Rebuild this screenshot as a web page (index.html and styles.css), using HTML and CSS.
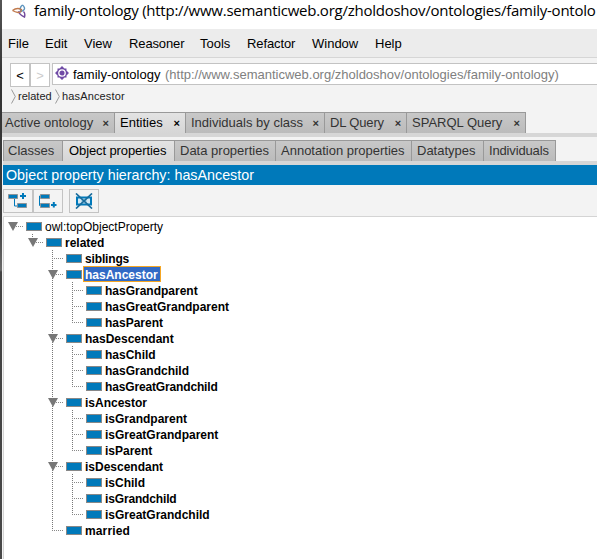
FILE: index.html
```html
<!DOCTYPE html>
<html lang="en">
<head>
<meta charset="utf-8">
<title>family-ontology</title>
<link rel="stylesheet" href="styles.css">
</head>
<body>
<div class="window">
  <header class="titlebar">
    <svg class="logo" width="14" height="14" viewBox="0 0 14 14" fill="none" stroke-width="1.4">
      <path d="M10.500 1Q7 3.500 9 7.500Q13 6 12.500 4Q12 2 10.500 1" stroke="#5b93bd"/>
      <path d="M7 7Q6.500 10.500 12.500 13Q13.500 9.500 11.500 7.500" stroke="#70489b"/>
      <path d="M.5 6.500Q5 3 9.500 5.500Q9 9 6 8.500Q3 8 .5 6.500" stroke="#c07a4d"/>
    </svg>
    <span>family-ontology (http://www.semanticweb.org/zholdoshov/ontologies/family-ontolo</span>
  </header>
  <nav class="menubar">
    <span class="m-file">File</span><span class="m-edit">Edit</span><span class="m-view">View</span><span class="m-reasoner">Reasoner</span><span class="m-tools">Tools</span><span class="m-refactor">Refactor</span><span class="m-window">Window</span><span>Help</span>
  </nav>
  <div class="location">
    <button class="nav">&lt;</button><button class="nav off">&gt;</button>
    <div class="field">
      <svg width="14" height="14" viewBox="0 0 14 14"><path d="M7 0L9.500 2.500H11.500V4.500L14 7L11.500 9.500V11.500H9.500L7 14L4.500 11.500H2.500V9.500L0 7L2.500 4.500V2.500H4.500Z" fill="#6f4aa5"/><circle cx="7" cy="7" r="3.200" fill="none" stroke="#fff" stroke-width="1.300"/></svg>
      <span class="name">family-ontology</span><span class="iri">(http://www.semanticweb.org/zholdoshov/ontologies/family-ontology)</span>
    </div>
  </div>
  <div class="crumbs">
    <svg width="5" height="15" viewBox="0 0 5 15"><path d="M.5.5L4.3 7.5L.5 14.5"/></svg><span class="c1">related</span>
    <svg width="5" height="15" viewBox="0 0 5 15"><path d="M.5.5L4.3 7.5L.5 14.5"/></svg><span class="c2">hasAncestor</span>
  </div>
  <div class="tabs main">
    <div class="tab first">Active ontology<i>×</i></div><div class="tab sel">Entities<i>×</i></div><div class="tab">Individuals by class<i>×</i></div><div class="tab tight">DL Query<i>×</i></div><div class="tab">SPARQL Query<i>×</i></div><div class="rest"></div>
  </div>
  <div class="strip"></div>
  <div class="tabs sub">
    <div class="tab edge">Classes</div><div class="tab sel">Object properties</div><div class="tab">Data properties</div><div class="tab">Annotation properties</div><div class="tab">Datatypes</div><div class="tab tight">Individuals</div><div class="rest"></div>
  </div>
  <div class="strip low"></div>
  <h1 class="view-title">Object property hierarchy: hasAncestor</h1>
  <div class="tools">
    <button><svg width="20" height="16" viewBox="0 0 20 16"><path d="M6.5 5v8H10" fill="none" stroke="#0079ba"/><path d="M.5 1.500h9v4h-9zM9.5 10.500h9v4h-9z" fill="#0079ba" stroke="#8b9398"/><path d="M12 3h6M15 0v6" stroke="#0079ba" stroke-width="2"/></svg></button>
    <button><svg width="20" height="16" viewBox="0 0 20 16"><path d="M4 3H1.500v9.500H4" fill="none" stroke="#0079ba"/><path d="M2.500 1.500h9v4h-9zM2.500 10.500h9v4h-9z" fill="#0079ba" stroke="#8b9398"/><path d="M13 12h5.500M15.800 9v5.500" stroke="#0079ba" stroke-width="2"/></svg></button>
    <button class="del"><svg width="20" height="16" viewBox="0 0 20 16"><path d="M3 4.500h14v7H3z" fill="#d5e8f3" stroke="#0079ba" stroke-width="2"/><path d="M7.500 5.500l2.500 1.500 2.500-1.500v5L10 9l-2.500 1.500z" fill="#8fc0dc"/><path d="M2 .5L18 15.500M18 .5L2 15.500" stroke="#176b9c" stroke-width="1.700"/></svg></button>
  </div>
  <div class="tree">
    <ul class="root">
      <li><div class="row open plain"><b></b><span>owl:topObjectProperty</span></div>
        <ul>
          <li><div class="row open"><b></b><span>related</span></div>
            <ul>
              <li><div class="row"><b></b><span class="t-sib">siblings</span></div></li>
              <li><div class="row open"><b></b><span class="picked">hasAncestor</span></div>
                <ul>
                  <li><div class="row"><b></b><span>hasGrandparent</span></div></li>
                  <li><div class="row"><b></b><span>hasGreatGrandparent</span></div></li>
                  <li><div class="row"><b></b><span>hasParent</span></div></li>
                </ul></li>
              <li><div class="row open"><b></b><span>hasDescendant</span></div>
                <ul>
                  <li><div class="row"><b></b><span>hasChild</span></div></li>
                  <li><div class="row"><b></b><span>hasGrandchild</span></div></li>
                  <li><div class="row"><b></b><span class="t-igg">hasGreatGrandchild</span></div></li>
                </ul></li>
              <li><div class="row open"><b></b><span>isAncestor</span></div>
                <ul>
                  <li><div class="row"><b></b><span>isGrandparent</span></div></li>
                  <li><div class="row"><b></b><span>isGreatGrandparent</span></div></li>
                  <li><div class="row"><b></b><span>isParent</span></div></li>
                </ul></li>
              <li><div class="row open"><b></b><span>isDescendant</span></div>
                <ul>
                  <li><div class="row"><b></b><span>isChild</span></div></li>
                  <li><div class="row"><b></b><span class="t-igg">isGrandchild</span></div></li>
                  <li><div class="row"><b></b><span>isGreatGrandchild</span></div></li>
                </ul></li>
              <li><div class="row"><b></b><span class="t-mar">married</span></div></li>
            </ul></li>
        </ul></li>
    </ul>
  </div>
</div>
</body>
</html>
```
FILE: styles.css
```css
* { box-sizing: border-box; }
html, body { margin: 0; height: 100%; overflow: hidden; }
body { font: 13px "Liberation Sans", Arial, sans-serif; color: #000; background: linear-gradient(#555 0, #333 80px, #3c3c3c 220px, #6b6b6b 270px, #424242 272px, #484848 100%); }
.window { margin-left: 2px; height: 559px; background: #f3f3f3; display: flex; flex-direction: column; overflow: hidden; white-space: nowrap; }
.window > * { flex: none; }
button { font: inherit; margin: 0; padding: 0; border: 1px solid #c3c3c3; }

.titlebar { height: 29px; background: #fff; padding: 0 0 9px 9px; display: flex; align-items: center; font: 15px/20px "Open Sans", sans-serif; letter-spacing: -.25px; }
.logo { margin: 1px 8px 0 1px; flex: none; }

.menubar { height: 29px; background: #ececec; border-bottom: 1px solid #d6d6d6; padding-left: 6px; display: flex; line-height: 29px; }
.m-file { width: 37px; }
.m-edit { width: 39px; }
.m-view { width: 45px; }
.m-reasoner { width: 71px; letter-spacing: -.12px; }
.m-tools { width: 47px; }
.m-refactor { width: 65px; letter-spacing: -.1px; }
.m-window { width: 63px; }

.location { height: 29px; padding: 5px 0 0 8px; display: flex; }
.nav { width: 20px; height: 24px; background: #fff; }
.nav.off { color: #ccc; }
.field { flex: 1; height: 22px; margin-left: 2px; border: 1px solid #c3c3c3; border-right: 0; background: #fff; display: flex; align-items: center; padding-left: 2px; line-height: 20px; }
.field svg { margin: -2px 4px 0 0; }
.field span { padding-top: 2px; }
.name { width: 92px; }
.iri { color: #808080; }

.crumbs { height: 25px; padding: 2px 0 0 9px; display: flex; font-size: 11px; line-height: 15px; color: #222; }
.crumbs path { fill: none; stroke: #999; }
.c1 { width: 39px; padding-left: 2px; }
.c2 { padding-left: 2px; letter-spacing: .15px; }

.tabs { display: grid; height: 21px; }
.tabs.main { grid-template-columns: 113px 71px 139px 82px 119px 1fr; }
.tabs.sub { grid-template-columns: 60px 112px 101px 136px 72px 72px 1fr; margin: 3px 0 0 1px; }
.tab { background: linear-gradient(#c8c8c8, #bbb); border: solid #999; border-width: 1px 1px 1px 0; padding: 0 5px; color: #333; line-height: 20px; display: flex; justify-content: space-between; }
.tab.first { padding-left: 3px; }
.tab.edge { border-left: 1px solid #999; padding-left: 4px; }
.tab.tight { letter-spacing: -.15px; }
.tab.sel { background: linear-gradient(#e3e3e3, #d6d6d6); border-bottom-color: #d6d6d6; color: #000; }
.sub .sel { padding-left: 6px; letter-spacing: -.1px; }
.tab i { font: bold 11px/20px "Liberation Sans", sans-serif; }
.rest { border-bottom: 1px solid #999; }
.strip { height: 4px; background: #d6d6d6; }
.strip.low { margin-left: 1px; }

.view-title { margin: 0 0 0 1px; padding-left: 3px; height: 20px; background: #0079ba; color: #fff; font: 14.3px/20px "Liberation Sans", sans-serif; }
.tools { display: flex; height: 31px; padding: 4px 0 0 1px; }
.tools button { width: 30px; height: 24px; background: #f3f3f3; display: flex; align-items: center; justify-content: center; }
.tools svg { display: block; }
.tools .del { margin-left: 6px; }

.window > .tree { flex: 1; margin-left: 1px; background: #fff; border: solid #d4d4d4; border-width: 1px 0 0 1px; padding: 1px 0 0 4px; font: bold 12px/14px "Liberation Sans", Arial, sans-serif; }
ul { list-style: none; margin: 0; padding: 0; }
li { position: relative; }
li > ul { margin-left: 20px; }
li li::before { content: ""; position: absolute; left: 4px; top: 0; width: 1px; height: 100%; background: repeating-linear-gradient(#777 0 1px, transparent 1px 2px); }
li li:last-child::before { height: 9px; }
.row { height: 16px; display: flex; align-items: center; position: relative; }
.row::before { content: ""; flex: none; width: 12px; height: 1px; margin: 0 2px 0 4px; background: repeating-linear-gradient(90deg, #888 0 1px, transparent 1px 2px); }
.row.open::after { content: ""; position: absolute; left: 0; top: 4px; width: 10px; height: 9px; background: #777; clip-path: polygon(0 0, 100% 0, 50% 100%); }
.row b { width: 16px; height: 9px; background: #0079ba; border: 1px solid #888; margin-right: 2px; }
.row span { height: 16px; padding: 2px 1px 0; }
.row.plain { font-weight: normal; }
.row .picked { background: #316ac5; color: #fff; border: 1px solid #f5a623; margin-left: -1px; padding: 1px 2px 0 1px; }
.t-sib, .t-igg { letter-spacing: -.15px; }
.t-mar { letter-spacing: .14px; }
```
